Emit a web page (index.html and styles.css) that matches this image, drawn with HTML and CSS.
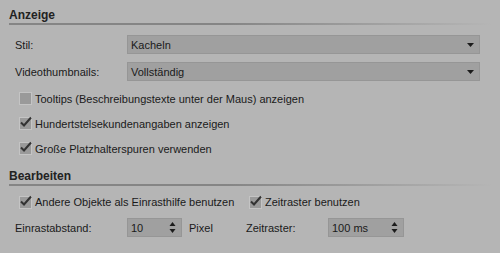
FILE: index.html
```html
<!DOCTYPE html>
<html>
<head>
<meta charset="utf-8">
<link rel="stylesheet" href="styles.css">
</head>
<body>
<div class="panel">
  <div class="title">Anzeige</div>
  <div class="row row-select first">
    <span class="label">Stil:</span>
    <div class="select"><span>Kacheln</span><svg class="arrow" width="7" height="4" viewBox="0 0 7 4"><path d="M0 0H7L3.5 4Z" fill="#1c1c1c"/></svg></div>
  </div>
  <div class="row row-select second">
    <span class="label">Videothumbnails:</span>
    <div class="select"><span>Vollständig</span><svg class="arrow" width="7" height="4" viewBox="0 0 7 4"><path d="M0 0H7L3.5 4Z" fill="#1c1c1c"/></svg></div>
  </div>
  <div class="checks">
    <label class="check-row"><span class="box"></span>Tooltips (Beschreibungstexte unter der Maus) anzeigen</label>
    <label class="check-row"><span class="box"><svg class="tick" width="14" height="13" viewBox="0 0 14 13"><path d="M2 6.5L5 9.5L12 1.5" fill="none" stroke="#333" stroke-width="2"/></svg></span>Hundertstelsekundenangaben anzeigen</label>
    <label class="check-row"><span class="box"><svg class="tick" width="14" height="13" viewBox="0 0 14 13"><path d="M2 6.5L5 9.5L12 1.5" fill="none" stroke="#333" stroke-width="2"/></svg></span>Große Platzhalterspuren verwenden</label>
  </div>
  <div class="title">Bearbeiten</div>
  <div class="row check-line">
    <label class="check-row wide"><span class="box"><svg class="tick" width="14" height="13" viewBox="0 0 14 13"><path d="M2 6.5L5 9.5L12 1.5" fill="none" stroke="#333" stroke-width="2"/></svg></span>Andere Objekte als Einrasthilfe benutzen</label>
    <label class="check-row"><span class="box"><svg class="tick" width="14" height="13" viewBox="0 0 14 13"><path d="M2 6.5L5 9.5L12 1.5" fill="none" stroke="#333" stroke-width="2"/></svg></span>Zeitraster benutzen</label>
  </div>
  <div class="row spin-line">
    <span class="label">Einrastabstand:</span>
    <div class="spin spin-a"><span>10</span><svg class="spin-arrows" width="7" height="13" viewBox="0 0 7 13"><path d="M0.5 5H6.5L3.5 1Z M0.5 8H6.5L3.5 12Z" fill="#1c1c1c"/></svg></div>
    <span class="unit">Pixel</span>
    <span class="label2">Zeitraster:</span>
    <div class="spin spin-b"><span>100 ms</span><svg class="spin-arrows" width="7" height="13" viewBox="0 0 7 13"><path d="M0.5 5H6.5L3.5 1Z M0.5 8H6.5L3.5 12Z" fill="#1c1c1c"/></svg></div>
  </div>
</div>
</body>
</html>
```
FILE: styles.css
```css
html, body {
  margin: 0;
  padding: 0;
  background: #b5b5b5;
}
body {
  width: 500px;
  height: 253px;
  overflow: hidden;
  font-family: "Liberation Sans", Arial, sans-serif;
  font-size: 11px;
  color: #1a1a1a;
}
.panel {
  display: flex;
  flex-direction: column;
  padding: 0 20px 0 9px;
}
.title {
  font-weight: bold;
  font-size: 12px;
  color: #222;
  line-height: 16px;
  padding-top: 7px;
  padding-bottom: 0;
  height: 16px;
  position: relative;
  margin-bottom: 2px;
}
.title::after {
  content: "";
  position: absolute;
  left: 0;
  right: -12px;
  bottom: -2px;
  height: 2px;
  background: linear-gradient(to right, #858585 0%, #858585 45%, #b5b5b5 100%);
}
.row {
  display: flex;
  align-items: center;
  padding-left: 6px;
}
.row-select {
  height: 19px;
}
.row-select.first { margin-top: 10px; }
.row-select.second { margin-top: 8px; }
.label {
  width: 112px;
  flex: none;
}
.select {
  flex: 1;
  height: 17px;
  border: 1px solid #969696;
  background: #a0a0a0;
  display: flex;
  align-items: center;
  justify-content: space-between;
  padding: 0 5px 0 3px;
  color: #1a1a1a;
}
.arrow { display: block; }
.checks {
  display: flex;
  flex-direction: column;
  margin-top: 5px;
  margin-bottom: 0;
}
.check-row {
  display: flex;
  align-items: center;
  height: 25px;
  padding-left: 10px;
  white-space: nowrap;
}
.box {
  width: 11px;
  height: 11px;
  border: 1px solid #c4c4c4;
  background: #9a9a9a;
  margin-right: 3px;
  position: relative;
  flex: none;
}
.tick {
  position: absolute;
  left: -1px;
  top: -2px;
}
.check-line {
  height: 24px;
  margin-top: 4px;
  padding-left: 0;
}
.check-line .check-row {
  height: 24px;
}
.check-row.wide {
  flex: none;
  width: 230px;
  min-width: 0;
  box-sizing: border-box;
}
.spin-line {
  margin-top: 4px;
  height: 19px;
}
.spin {
  height: 17px;
  border: 1px solid #969696;
  background: #a0a0a0;
  display: flex;
  align-items: center;
  justify-content: space-between;
  padding: 0 5px 0 3px;
  flex: none;
  box-sizing: content-box;
}
.spin-a { width: 45px; }
.spin-b { width: 66px; }
.spin-arrows { display: block; }
.unit {
  margin-left: 7px;
  width: 57px;
  flex: none;
}
.label2 {
  width: 82px;
  flex: none;
}
```
